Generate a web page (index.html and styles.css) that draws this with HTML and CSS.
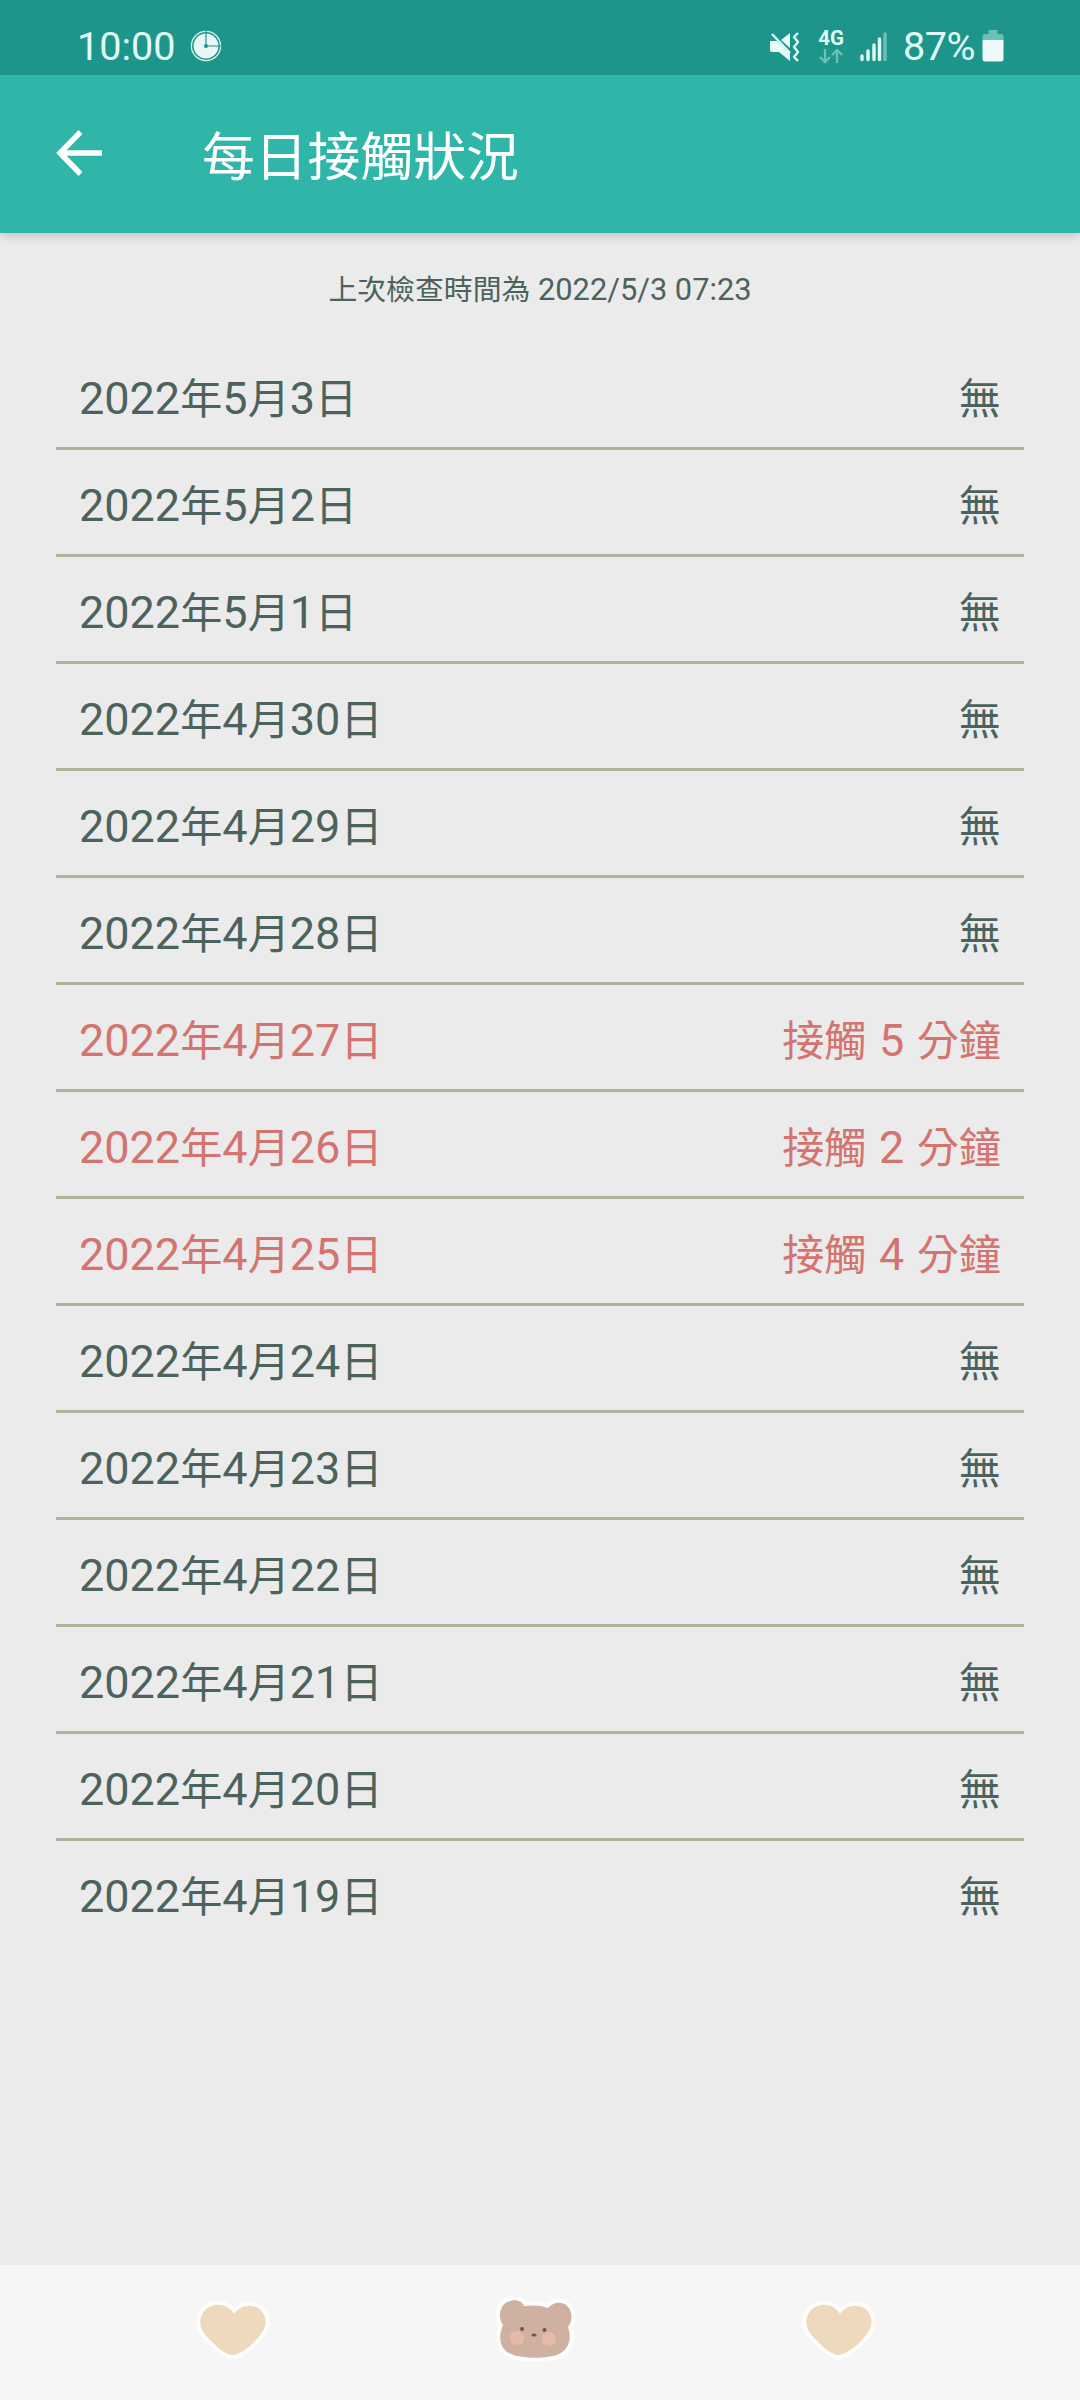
FILE: index.html
```
<!DOCTYPE html>
<html lang="zh-Hant">
<head>
    <meta charset="UTF-8">
    <title>每日接觸狀況</title>
    <link rel="stylesheet" href="styles.css">
</head>
<body>
    <div class="statusBar">
        <span class="time">10:00</span>
        <svg class="clock" width="32" height="32" viewBox="0 0 32 32">
            <circle cx="16" cy="16" r="14.6" fill="none" stroke="#d5f5f0" stroke-width="1.3"/>
            <circle cx="16" cy="16" r="12.4" fill="#e8f7f5"/>
            <path d="M16 1v15h15" fill="none" stroke="#1e958a" stroke-width="1.2"/>
            <circle cx="16" cy="16" r="2" fill="#1e958a"/>
        </svg>
        <div class="statusRight">
            <svg class="mute" width="31" height="30" viewBox="0 0 31 30">
                <path d="M1 10q0-1 1-1h6l13 13v7L10 20H3q-2 0-2-2z" fill="#e6faf7"/>
                <path d="M12 8l9-7v15z" fill="#e6faf7"/>
                <path d="M3 2l18 19" stroke="#e6faf7" stroke-width="2.4"/>
                <path d="M29 1l-4 4 4 5-4 5 4 5-4 5 4 4" fill="none" stroke="#e6faf7" stroke-width="2.3" stroke-linejoin="round"/>
            </svg>
            <div class="network">
                <span>4G</span>
                <svg width="24" height="15" viewBox="0 0 24 15" fill="none" stroke="#6ec0b7" stroke-width="2.3">
                    <path d="M6 0v13M1 8l5 5 5-5M18 14V1M13 6l5-5 5 5"/>
                </svg>
            </div>
            <svg class="signal" width="27" height="30" viewBox="0 0 27 30" fill="none" stroke="#e0fbf6" stroke-width="3.4" stroke-linecap="round">
                <path d="M2 24v3.5M8 19v8.5M14 13v14.5M19.5 7v20.5"/>
                <path d="M25 2v25.500" stroke="#6ec0b7"/>
            </svg>
            <span class="percent">87%</span>
            <svg class="battery" width="22" height="32" viewBox="0 0 22 32">
                <path d="M6.500 1q0-1 1-1h7q1 0 1 1v3H19q2.500 0 2.500 2.500V12H.5V6.500Q.5 4 3 4h3.500z" fill="#6ec0b7"/>
                <path d="M.5 10h21v19q0 2.500-2.500 2.500H3Q.5 31.500.5 29z" fill="#eefaf8"/>
            </svg>
        </div>
    </div>

    <header class="header">
        <svg class="back" width="46" height="46" viewBox="0 0 46 46" fill="none" stroke="#fff" stroke-width="5.5">
            <path d="M24.500 2L4 23l20.500 21M3.500 23H46"/>
        </svg>
        <h1 class="title">每日接觸狀況</h1>
    </header>

    <main class="content">
        <p class="checked"><span class="zh">上次檢查時間為</span> 2022/5/3 07:23</p>
        <ul id="days" class="days"></ul>
    </main>

    <nav class="tabs">
        <svg class="heart" width="76" height="62" viewBox="0 0 76 62">
            <path d="M38 13C31 1 17 2 9 9C1 18 4 29 12 37C19 44 25 50 32 53Q36 55 41 53C51 49 63 38 68 28C72 19 68 9 60 6C51 3 43 6 38 13z" transform="translate(0 1)" fill="#eed9bd" stroke="#fefdfb" stroke-width="8" stroke-linejoin="round" paint-order="stroke"/>
        </svg>
        <svg class="bear" width="82" height="66" viewBox="0 0 82 66">
            <path d="M29 9C36 8 46 8 53 11C61 2 74 5 76 16C77 22 76 26 73 30C77 42 74 52 64 57C53 62 27 62 16 57C6 53 2 42 8 28C2 20 5 6 15 4C22 2 28 5 29 9z" fill="#cfb1a1" stroke="#fdfdfb" stroke-width="8" stroke-linejoin="round" paint-order="stroke"/>
            <circle cx="22" cy="41" r="7.2" fill="#e7b9aa"/>
            <circle cx="54" cy="42" r="7.2" fill="#e7b9aa"/>
            <circle cx="27" cy="32" r="2" fill="#755548"/>
            <circle cx="49.500" cy="33" r="2" fill="#755548"/>
            <ellipse cx="39" cy="38" rx="2.700" ry="1.600" fill="#755548"/>
        </svg>
        <svg class="heart" width="76" height="62" viewBox="0 0 76 62">
            <path d="M38 13C31 1 17 2 9 9C1 18 4 29 12 37C19 44 25 50 32 53Q36 55 41 53C51 49 63 38 68 28C72 19 68 9 60 6C51 3 43 6 38 13z" transform="translate(0 1)" fill="#eed9bd" stroke="#fefdfb" stroke-width="8" stroke-linejoin="round" paint-order="stroke"/>
        </svg>
    </nav>

<script>
        // minutes of contact on the days that had any
        const contacts = { '4/27': 5, '4/26': 2, '4/25': 4 };
        const daysList = document.getElementById('days');

        // chinese characters are set a bit smaller than the digits
        function mixed(text) {
            return text.replace(/[^\d ]+/g, zh => `<span class="zh">${zh}</span>`);
        }

        for (let i = 0; i < 15; i++) {
            const date = new Date(2022, 4, 3 - i);
            const month = date.getMonth() + 1;
            const day = date.getDate();
            const minutes = contacts[`${month}/${day}`];

            const row = document.createElement('li');
            row.className = minutes ? 'day contact' : 'day';
            row.innerHTML = `
                <span>${mixed(`2022年${month}月${day}日`)}</span>
                <span>${mixed(minutes ? `接觸 ${minutes} 分鐘` : '無')}</span>
            `;
            daysList.appendChild(row);
        }
</script>

</body>
</html>
```
FILE: styles.css
```
* {
    box-sizing: border-box;
}

body {
    margin: 0;
    height: 2400px;
    display: flex;
    flex-direction: column;
    background: #ebebeb;
    color: #4c635d;
    font-family: Roboto, "Noto Sans CJK TC", sans-serif;
}

.statusBar {
    height: 75px;
    padding: 17px 76px 0 77px;
    display: flex;
    align-items: flex-start;
    background: #1e958a;
    color: #e0fbf6;
    font-size: 39.6px;
    line-height: 60px;
    z-index: 2;
}

.time {
    width: 113px;
}

.clock {
    margin-top: 13px;
}

.statusRight {
    margin-left: auto;
    display: flex;
    align-items: flex-start;
}

.mute {
    margin: 15px 18px 0 0;
}

.network {
    width: 26px;
    margin: 11px 16px 0 0;
    display: flex;
    flex-direction: column;
    align-items: center;
    font-size: 20.5px;
    font-weight: bold;
    line-height: 21px;
}

.signal {
    margin: 15px 16px 0 0;
}

.percent {
    letter-spacing: -0.5px;
}

.battery {
    margin: 13px 0 0 7px;
}

.header {
    height: 158px;
    padding: 0 56px 2px;
    display: flex;
    align-items: center;
    background: #2fb6a9;
    box-shadow: 0 3px 9px rgba(0, 0, 0, 0.18);
    z-index: 1;
}

.title {
    margin: 0 0 0 100px;
    color: #fff;
    font-size: 52.8px;
    font-weight: normal;
}

.content {
    flex: 1;
    padding: 0 56px;
}

.checked {
    height: 110px;
    margin: 0;
    text-align: center;
    font-size: 30.8px;
    line-height: 114px;
}

.zh {
    font-size: 0.937em;
}

.days {
    margin: 0;
    padding: 0;
    list-style: none;
}

.day {
    height: 107px;
    padding: 0 23px;
    display: flex;
    justify-content: space-between;
    border-bottom: 3px solid #b1b39b;
    font-size: 45px;
    line-height: 112px;
    word-spacing: 1.3px;
}

.day:last-child {
    border-bottom: none;
}

.contact {
    color: #d37470;
}

.tabs {
    height: 135px;
    padding: 0 202px 4px 196px;
    display: flex;
    align-items: center;
    justify-content: space-between;
    background: #f6f6f6;
}

.bear {
    margin: 0 2px 2px 0;
}
```
